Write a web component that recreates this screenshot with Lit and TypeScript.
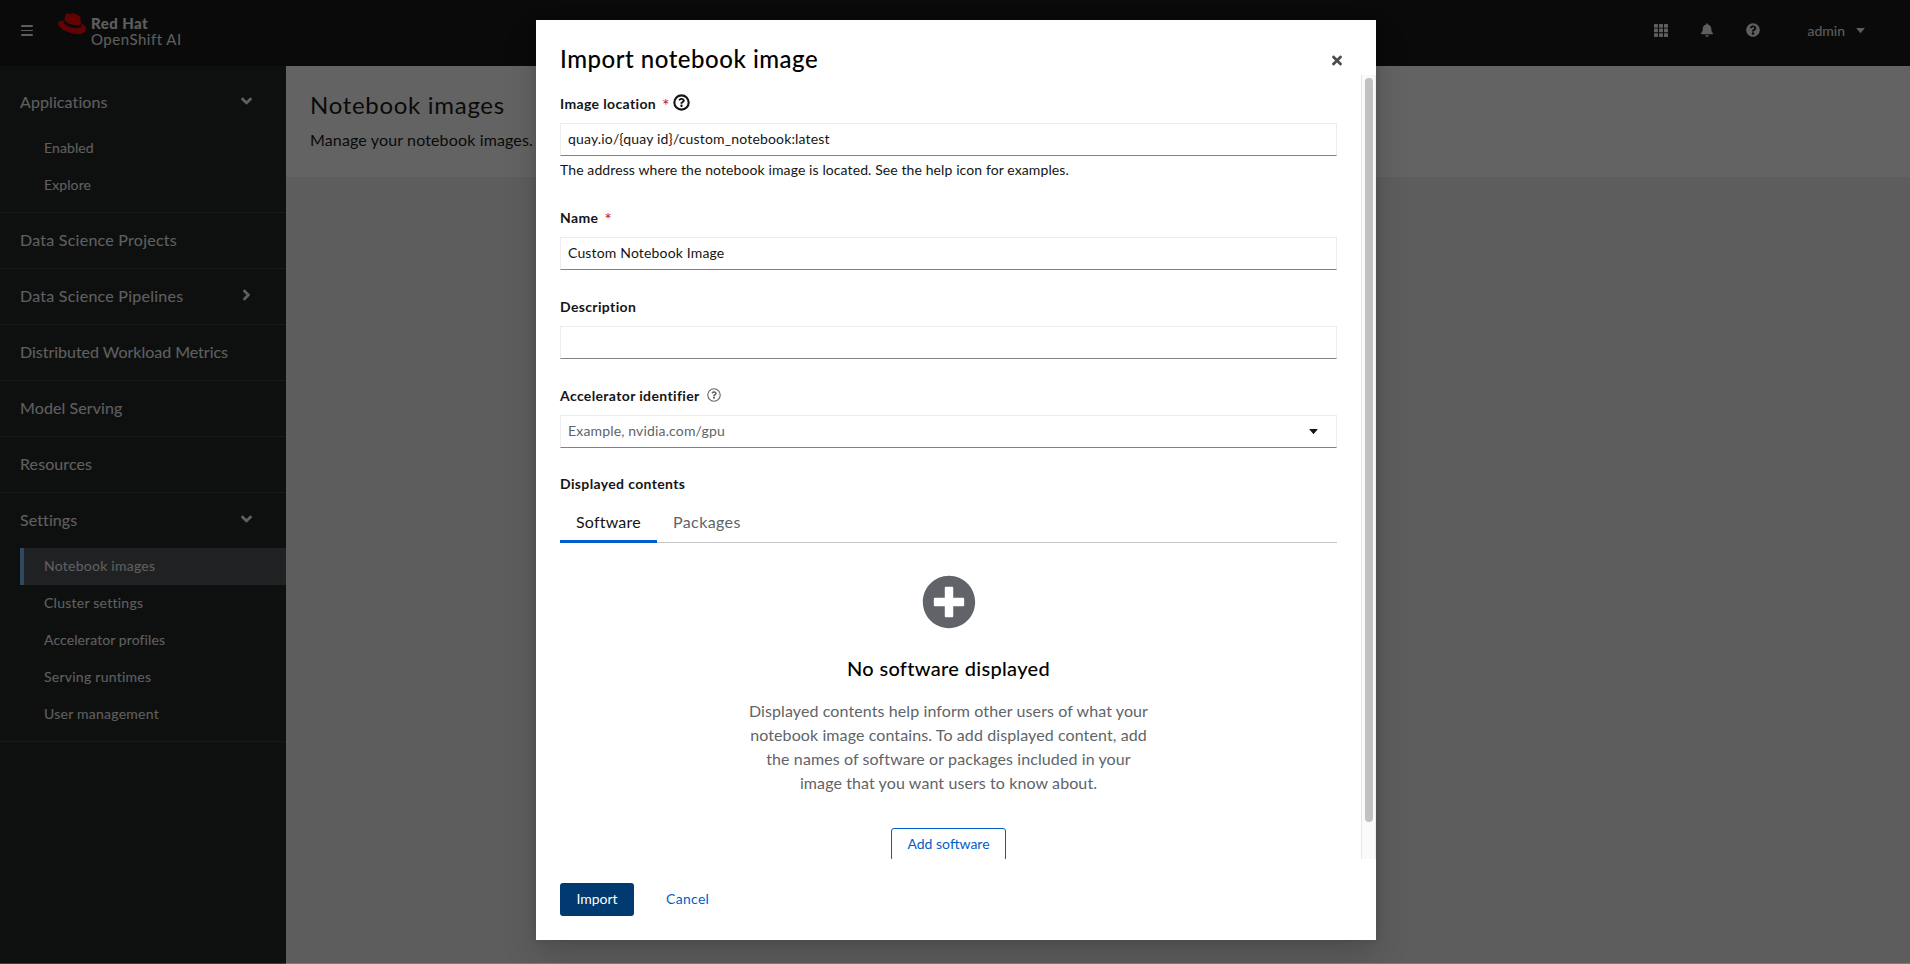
import { LitElement, html, css, svg, nothing } from "lit";
import { customElement, property } from "lit/decorators.js";
import { classMap } from "lit/directives/class-map.js";

const QUESTION =
  "M262.655 90c-54.497 0-89.255 22.957-116.549 63.758-3.536 5.286-2.353 12.415 2.715 16.258l34.699 26.31c5.205 3.947 12.621 3.008 16.665-2.122 17.864-22.658 30.113-35.797 57.303-35.797 20.429 0 45.698 13.148 45.698 32.958 0 14.976-12.363 22.667-32.534 33.976C247.128 238.528 216 254.941 216 296v4c0 6.627 5.373 12 12 12h56c6.627 0 12-5.373 12-12v-1.333c0-28.462 83.186-29.647 83.186-106.667 0-58.002-60.165-102-116.531-102zM256 338c-25.365 0-46 20.635-46 46 0 25.364 20.635 46 46 46s46-20.636 46-46c0-25.364-20.635-46-46-46z";

const ICONS: Record<string, [string, string]> = {
  bell: ["0 0 448 512", "M224 512c35.32 0 63.97-28.65 63.97-64H160.03c0 35.35 28.65 64 63.97 64zm215.39-149.71c-19.32-20.76-55.47-51.99-55.47-154.29 0-77.7-54.48-139.9-127.94-155.16V32c0-17.67-14.32-32-31.98-32s-31.98 14.33-31.98 32v20.84C118.56 68.1 64.08 130.3 64.08 208c0 102.3-36.15 133.53-55.47 154.29-6 6.45-8.66 14.16-8.61 21.71.11 16.4 12.98 32 32.1 32h383.8c19.12 0 32-15.6 32.1-32 .05-7.55-2.61-15.27-8.61-21.71z"],
  help: ["0 0 512 512", "M504 256c0 136.997-111.043 248-248 248S8 392.997 8 256C8 119.083 119.043 8 256 8s248 111.083 248 248z" + QUESTION],
  down: ["0 0 320 512", "M143 352.3L7 216.3c-9.4-9.4-9.4-24.6 0-33.9l22.6-22.6c9.4-9.4 24.6-9.4 33.9 0l96.4 96.4 96.4-96.4c9.4-9.4 24.6-9.4 33.9 0l22.6 22.6c9.4 9.4 9.4 24.6 0 33.9l-136 136c-9.2 9.4-24.4 9.4-33.8 0z"],
  right: ["-32 0 320 512", "M224.3 273l-136 136c-9.4 9.4-24.6 9.4-33.9 0l-22.6-22.6c-9.4-9.4-9.4-24.6 0-33.9l96.4-96.4-96.4-96.4c-9.4-9.4-9.4-24.6 0-33.9L54.3 103c9.4-9.4 24.6-9.4 33.9 0l136 136c9.5 9.4 9.5 24.6.1 34z"],
  times: ["0 0 352 512", "M242.72 256l100.07-100.07c12.28-12.28 12.28-32.19 0-44.48l-22.24-22.24c-12.28-12.28-32.19-12.28-44.48 0L176 189.28 75.93 89.21c-12.28-12.28-32.19-12.28-44.48 0L9.21 111.45c-12.28 12.28-12.28 32.19 0 44.48L109.28 256 9.21 356.07c-12.28 12.28-12.28 32.19 0 44.48l22.24 22.24c12.28 12.28 32.2 12.28 44.48 0L176 322.72l100.07 100.07c12.28 12.28 32.2 12.28 44.48 0l22.24-22.24c12.28-12.28 12.28-32.19 0-44.48L242.72 256z"],
  plus: ["0 0 512 512", "M256 8C119 8 8 119 8 256s111 248 248 248 248-111 248-248S393 8 256 8zm144 276c0 6.6-5.4 12-12 12h-92v92c0 6.6-5.4 12-12 12h-56c-6.6 0-12-5.4-12-12v-92h-92c-6.6 0-12-5.4-12-12v-56c0-6.6 5.4-12 12-12h92v-92c0-6.6 5.4-12 12-12h56c6.6 0 12 5.4 12 12v92h92c6.6 0 12 5.4 12 12v56z"],
  caret: ["0 0 8 5", "M.5 0h7a.4.4 0 0 1 .3.75L4.4 4.7a.55.55 0 0 1-.8 0L.2.75A.4.4 0 0 1 .5 0z"],
  hat: ["0 2.9 24 18.2", "M16.009 13.386c1.577 0 3.86-.326 3.86-2.202a1.765 1.765 0 0 0-.04-.431l-.94-4.08c-.216-.898-.406-1.305-1.982-2.093-1.223-.625-3.888-1.658-4.676-1.658-.733 0-.947.946-1.822.946-.842 0-1.467-.706-2.255-.706-.757 0-1.25.515-1.63 1.576 0 0-1.06 2.99-1.197 3.424a.81.81 0 0 0-.028.245c0 1.162 4.577 4.974 10.71 4.974m4.101-1.435c.218 1.032.218 1.14.218 1.277 0 1.765-1.984 2.745-4.593 2.745-5.895.004-11.06-3.451-11.06-5.734a2.326 2.326 0 0 1 .19-.925C2.746 9.415 0 9.794 0 12.217c0 3.969 9.405 8.861 16.851 8.861 5.71 0 7.149-2.582 7.149-4.62 0-1.605-1.387-3.425-3.887-4.512"],
};

const icon = (name: string, cls: string) =>
  html`<svg class="icon ${cls}" viewBox=${ICONS[name][0]} aria-hidden="true">
    <path fill="currentColor" fill-rule="evenodd" d=${ICONS[name][1]}></path>
  </svg>`;

const outlinedHelp = (cls: string, ring: number) =>
  html`<svg class="icon ${cls}" viewBox="0 0 512 512" aria-hidden="true">
    <circle cx="256" cy="256" r=${248 - ring / 2} fill="none" stroke="currentColor" stroke-width=${ring}></circle>
    <path fill="currentColor" transform="translate(51 45) scale(.8)" d=${QUESTION}></path>
  </svg>`;

const shared = css`
  * { box-sizing: border-box; }
  .icon { display: block; flex: none; }
  .k0 { letter-spacing: -0.02px; }
  .k1 { letter-spacing: 0.1px; }
  .k2 { letter-spacing: 0.25px; }
`;

@customElement("app-masthead")
export class AppMasthead extends LitElement {
  static styles = [shared, css`
    :host { display: flex; height: 66px; background: #151515; color: #f2f2f2; padding: 0 45px 0 21px; }
    .burger { display: flex; flex-direction: column; gap: 3px; width: 12px; margin-top: 25px; }
    .bar { height: 1.7px; background: currentColor; border-radius: 1px; }
    .brand { display: flex; margin-left: 25px; padding-top: 13px; }
    .hat { width: 28px; height: 21.2px; color: #f00; }
    .words { margin: 2px 0 0 5px; line-height: 16px; font-size: 15px; }
    .strong { font-weight: 900; letter-spacing: 0.45px; font-size: 15px; }
    .product { letter-spacing: 0.5px; }
    .tools { margin-left: auto; display: flex; align-items: center; height: 60px; }
    .grid { width: 14px; height: 13px; }
    .bell { width: 12px; height: 14px; margin-left: 33px; }
    .help { width: 14px; height: 14px; margin-left: 33px; }
    .user { display: flex; align-items: center; margin: 0 0 0 48px; font-size: 14px; }
    .caret { width: 9px; height: 5px; margin: 0 0 0 11px; }
  `];
  render() {
    return html`
      <div class="burger"><div class="bar"></div><div class="bar"></div><div class="bar"></div></div>
      <div class="brand">
        ${icon("hat", "hat")}
        <div class="words"><div class="strong">Red Hat</div><div class="product">OpenShift AI</div></div>
      </div>
      <div class="tools">
        <svg class="icon grid" viewBox="0 0 14 13" aria-hidden="true">
          ${[0, 5, 10].map((x) => [0, 4.6, 9.2].map((y) => svg`<rect x=${x} y=${y} width="4" height="3.7" rx=".6" fill="currentColor"></rect>`))}
        </svg>
        ${icon("bell", "bell")} ${icon("help", "help")}
        <div class="user">admin ${icon("caret", "caret")}</div>
      </div>`;
  }
}

interface NavItem { label: string; track?: string; open?: boolean; children?: { label: string; track?: string; current?: boolean }[]; }

const NAV: NavItem[] = [
  { label: "Applications", open: true, children: [{ label: "Enabled" }, { label: "Explore" }] },
  { label: "Data Science Projects", track: "k2" },
  { label: "Data Science Pipelines", track: "k2", open: false },
  { label: "Distributed Workload Metrics", track: "k0" },
  { label: "Model Serving" },
  { label: "Resources" },
  {
    label: "Settings", open: true, children: [
      { label: "Notebook images", track: "k2", current: true },
      { label: "Cluster settings", track: "k2" },
      { label: "Accelerator profiles" },
      { label: "Serving runtimes", track: "k2" },
      { label: "User management", track: "k2" },
    ],
  },
];

@customElement("app-nav")
export class AppNav extends LitElement {
  static styles = [shared, css`
    :host { display: block; width: 286px; background: #212525; color: #f5f5f5; padding-top: 9px; }
    .section { border-bottom: 1px solid #383b3e; }
    .link { display: flex; align-items: center; justify-content: space-between; height: 55px; padding: 0 34px 3px 20px; font-size: 16px; }
    .group { padding-bottom: 8px; }
    .arrow { width: 11px; height: 18px; }
    .sub { display: flex; align-items: center; height: 37px; margin-left: 20px; padding: 0 0 2px 24px; font-size: 14px; }
    .current { background: #4f5255; border-left: 4px solid #73bcf7; padding-left: 20px; }
  `];
  render() {
    return NAV.map((n) => html`
      <div class=${classMap({ section: true, group: !!n.children })}>
        <div class="link"><span class=${n.track ?? "k1"}>${n.label}</span>
          ${n.open === undefined ? nothing : icon(n.open ? "down" : "right", "arrow")}</div>
        ${n.children?.map((c) => html`<div class=${classMap({ sub: true, current: !!c.current })}><span class=${c.track ?? "k1"}>${c.label}</span></div>`)}
      </div>`);
  }
}

@customElement("form-field")
export class FormField extends LitElement {
  @property() label = "";
  @property() value = "";
  @property() placeholder = "";
  @property() helper = "";
  @property() help = "";
  @property({ type: Boolean }) required = false;
  @property({ type: Boolean }) select = false;
  static styles = [shared, css`
    :host { display: block; font-size: 14px; color: #151515; }
    .label { display: flex; align-items: center; height: 21px; padding-bottom: 1px; margin-bottom: 9px; font-weight: 700; letter-spacing: 0.36px; }
    .star { color: #c9190b; margin: 0 0 0 6px; font-size: 18px; line-height: 20px; padding-top: 3px; font-weight: 400; letter-spacing: 0; width: 8px; }
    .strong { width: 17px; height: 17px; margin: -1px 0 0 3px; }
    .light { width: 14px; height: 14px; margin: 0 0 0 7px; color: #606468; }
    .box { display: flex; align-items: center; justify-content: space-between; height: 33px; border: 1px solid #ececec; border-bottom-color: #808285; padding: 0 18px 2px 7px; letter-spacing: 0.16px; }
    .ghost { color: #606468; }
    .caret { width: 9px; height: 5px; margin-top: 1px; }
    .helper { margin-top: 3px; padding-bottom: 1px; line-height: 21px; letter-spacing: 0.1px; }
  `];
  render() {
    return html`
      <div class="label"><span>${this.label}</span>
        ${this.required ? html`<span class="star">*</span>` : nothing}
        ${this.help ? outlinedHelp(this.help, this.help === "strong" ? 64 : 40) : nothing}</div>
      <div class="box"><span class=${classMap({ ghost: !this.value })}>${this.value || this.placeholder}</span>
        ${this.select ? icon("caret", "caret") : nothing}</div>
      ${this.helper ? html`<div class="helper">${this.helper}</div>` : nothing}`;
  }
}

@customElement("import-dialog")
export class ImportDialog extends LitElement {
  static styles = [shared, css`
    :host { display: flex; flex-direction: column; width: 840px; height: 920px; background: #fff; color: #151515;
      box-shadow: 0 16px 32px rgba(3,3,3,.16), 0 0 8px rgba(3,3,3,.1); }
    .head { display: flex; justify-content: space-between; height: 55px; padding: 23px 34px 0 24px; flex: none; }
    .title { font-size: 24px; font-weight: 500; line-height: 31px; letter-spacing: 0.52px; color: #000; }
    .times { width: 10px; height: 15px; margin-top: 10px; color: #4a4d50; }
    .scroll { display: flex; height: 784px; flex: none; overflow: hidden; }
    .form { flex: 1; padding: 18px 24px 0; display: flex; flex-direction: column; }
    .form form-field { margin-bottom: 26px; }
    .caption { font-size: 14px; font-weight: 700; line-height: 20px; height: 21px; letter-spacing: 0.36px; }
    .tabs { display: flex; height: 40px; margin-top: 9px; font-size: 16px; line-height: 38px; border-bottom: 1px solid #c7c7c7; }
    .tab { height: 40px; padding: 0 16px; color: #606468; letter-spacing: 0.4px; }
    .active { color: #151515; border-bottom: 3px solid #005ec8; width: 97px; letter-spacing: 0.2px; }
    .empty { display: flex; flex-direction: column; align-items: center; padding-top: 32px; flex: none; }
    .plus { width: 54px; height: 54px; color: #606468; }
    .none { margin-top: 24px; font-size: 20px; font-weight: 500; line-height: 30px; letter-spacing: 0.32px; color: #000; }
    .body { margin-top: 16px; width: 410px; text-align: center; font-size: 16px; line-height: 24px; letter-spacing: 0.1px; color: #606468; white-space: nowrap; }
    .add { margin-top: 33px; width: 115px; height: 33px; border: 1px solid #005ec8; border-radius: 3px; color: #005ec8; font-size: 14px; line-height: 30px; text-align: center; }
    .track { width: 15px; background: #fafafa; border-left: 1px solid #e6e6e6; border-right: 1px solid #ededed; padding: 3px 2px 0 3px; }
    .thumb { height: 744px; border-radius: 4px; background: #c1c1c1; }
    .foot { display: flex; padding: 24px 24px 0; font-size: 14px; line-height: 32px; }
    .import { width: 74px; height: 33px; background: #003a70; color: #fff; border-radius: 3px; text-align: center; }
    .cancel { margin-left: 32px; color: #005ec8; letter-spacing: 0.3px; }
  `];
  render() {
    return html`
      <div class="head"><div class="title">Import notebook image</div>${icon("times", "times")}</div>
      <div class="scroll">
        <div class="form">
          <form-field label="Image location" required help="strong"
            value="quay.io/{quay id}/custom_notebook:latest"
            helper="The address where the notebook image is located. See the help icon for examples."></form-field>
          <form-field label="Name" required value="Custom Notebook Image"></form-field>
          <form-field label="Description"></form-field>
          <form-field label="Accelerator identifier" help="light" placeholder="Example, nvidia.com/gpu" select></form-field>
          <div class="caption">Displayed contents</div>
          <div class="tabs"><div class="tab active">Software</div><div class="tab">Packages</div></div>
          <div class="empty">
            ${icon("plus", "plus")}
            <div class="none">No software displayed</div>
            <div class="body">Displayed contents help inform other users of what your<br />notebook image contains. To add displayed content, add<br />the names of software or packages included in your<br />image that you want users to know about.</div>
            <div class="add">Add software</div>
          </div>
        </div>
        <div class="track"><div class="thumb"></div></div>
      </div>
      <div class="foot"><div class="import">Import</div><div class="cancel">Cancel</div></div>`;
  }
}

@customElement("app-root")
export class AppRoot extends LitElement {
  static styles = [shared, css`
    :host { display: block; position: relative; width: 1910px; height: 964px; overflow: hidden; font-family: Lato, "Open Sans", sans-serif; }
    .page { display: flex; flex-direction: column; height: 964px; }
    .main { display: flex; flex: 1; }
    .content { flex: 1; background: #f0f0f0; }
    .intro { height: 111px; background: #fff; padding: 23px 24px; color: #151515; }
    .heading { font-size: 24px; line-height: 31px; letter-spacing: 0.7px; }
    .text { margin-top: 8px; font-size: 16px; line-height: 24px; letter-spacing: 0.14px; }
    .backdrop { position: absolute; inset: 0; display: flex; justify-content: center; align-items: flex-start; padding: 20px 0 0 2px; background: rgba(3,3,3,.62); }
    .edge { position: absolute; left: 0; right: 0; bottom: 0; height: 1px; background: rgba(255,255,255,.2); }
  `];
  render() {
    return html`
      <div class="page">
        <app-masthead></app-masthead>
        <div class="main">
          <app-nav></app-nav>
          <div class="content">
            <div class="intro"><div class="heading">Notebook images</div><div class="text">Manage your notebook images.</div></div>
          </div>
        </div>
      </div>
      <div class="backdrop"><import-dialog></import-dialog></div>
      <div class="edge"></div>`;
  }
}
